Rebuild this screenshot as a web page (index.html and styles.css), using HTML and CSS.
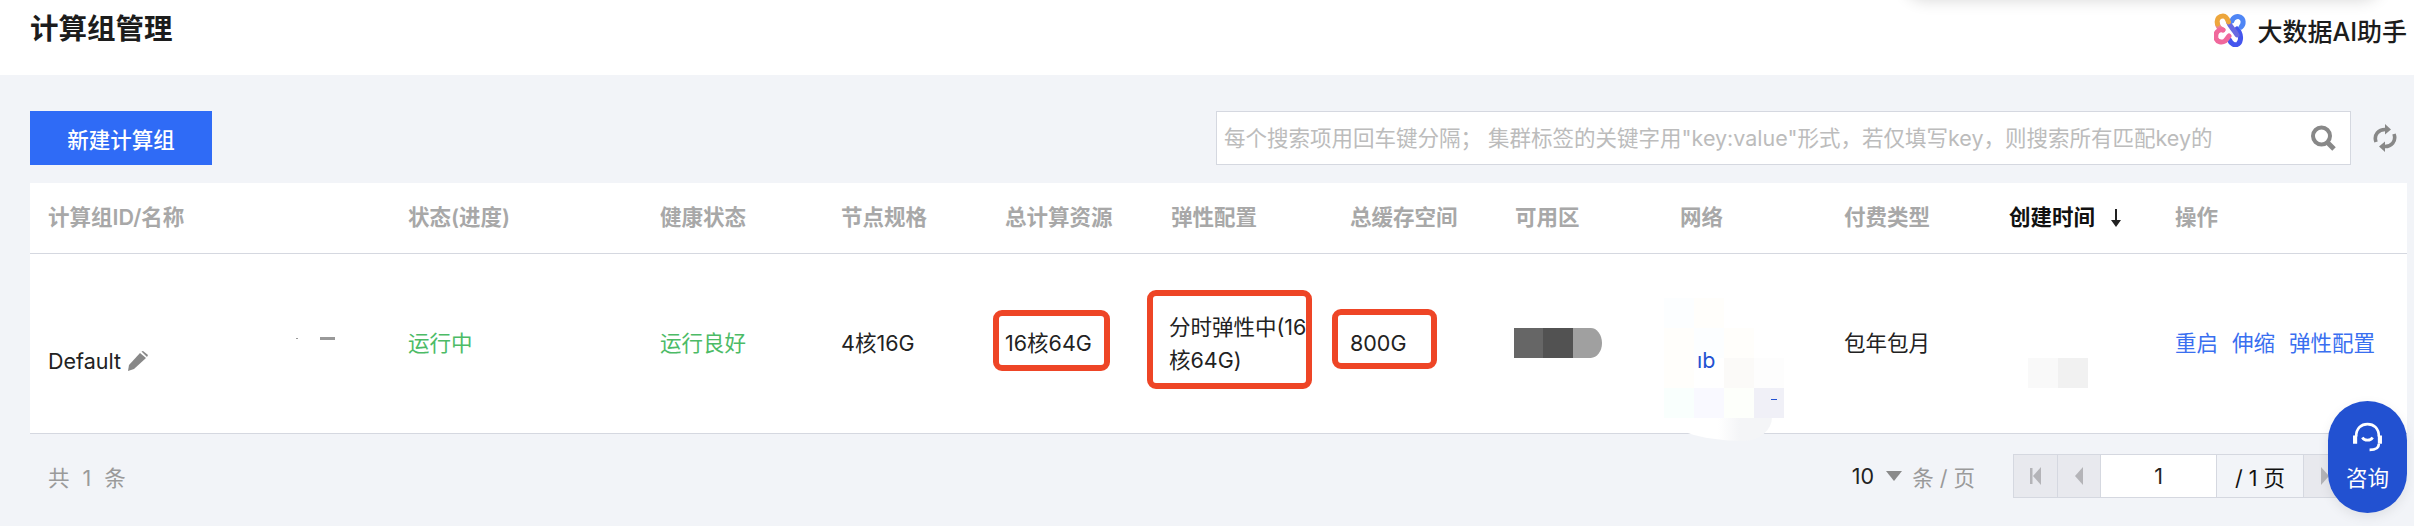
FILE: index.html

```html
<!DOCTYPE html>
<html lang="zh-CN">
<head>
  <meta charset="UTF-8">
  <title>计算组管理</title>
  <link rel="stylesheet" href="styles.css">
</head>
<body>
  <header class="topbar">
    <h1 class="title">计算组管理</h1>
    <div class="assistant">
      <svg class="assistant-logo" viewBox="8 4 34 34" fill="none" stroke-width="5" stroke-linecap="round">
        <path d="M31 20 C35 24 36 32 32 35 C29 37 25 35 23.500 31" stroke="#4455ee"/>
        <path d="M22.500 13 C24 18 28 20 31 26" stroke="#6a6ae0"/>
        <path d="M26 12 C27 8 31 7 34 8 C38 10 38 15 35 18" stroke="#4f86f5"/>
        <path d="M11.500 15 C12 18 14 20 17 21" stroke="#e8858f"/>
        <path d="M17 21 C12 20 9 24 10 29 C11 33 16 34 19 32 C21 30 22 28 23 27" stroke="#f0689c"/>
        <path d="M11.500 15 C10 9 14 7 17 7 C20 7 21.500 10 22.500 13" stroke="#eda63c"/>
      </svg>
      <span>大数据AI助手</span>
    </div>
  </header>

  <main class="content">
    <div class="toolbar">
      <button class="btn-primary">新建计算组</button>
      <div class="search">
        <input type="text" placeholder="每个搜索项用回车键分隔； 集群标签的关键字用&quot;key:value&quot;形式，若仅填写key，则搜索所有匹配key的">
        <svg class="search-icon" viewBox="0 0 28 28" fill="none" stroke="#888" stroke-width="4">
          <circle cx="12.500" cy="12" r="8.500"/>
          <path d="M18.500 18.500 L25 25" stroke-width="5"/>
        </svg>
      </div>
      <svg class="refresh" viewBox="0 0 24 30" fill="none" stroke="#888" stroke-width="3.600">
        <path d="M3 19 C0.500 12 5.500 6 13 6.500"/>
        <path d="M21 11 C23.500 18 18.500 24 11 23.500"/>
        <path d="M12 1 L18 6.500 L12 11.500 Z" fill="#888" stroke="none"/>
        <path d="M12 18.500 L6 23.500 L12 29 Z" fill="#888" stroke="none"/>
      </svg>
    </div>

    <table class="cluster-table">
      <colgroup>
        <col class="c-name"><col class="c-status"><col class="c-health"><col class="c-spec">
        <col class="c-total"><col class="c-scale"><col class="c-cache"><col class="c-zone">
        <col class="c-net"><col class="c-pay"><col class="c-time"><col>
      </colgroup>
      <thead>
        <tr>
          <th>计算组ID/名称</th>
          <th>状态(进度)</th>
          <th>健康状态</th>
          <th>节点规格</th>
          <th>总计算资源</th>
          <th>弹性配置</th>
          <th>总缓存空间</th>
          <th>可用区</th>
          <th>网络</th>
          <th>付费类型</th>
          <th class="sorted">创建时间
            <svg class="sort-arrow" viewBox="0 0 12 18" fill="#222"><path d="M5 0 H7 V11 H11 L6 18 L1 11 H5 Z"/></svg>
          </th>
          <th>操作</th>
        </tr>
      </thead>
      <tbody>
        <tr>
          <td class="name-cell">
            Default
            <svg class="edit" viewBox="0 0 20 20" fill="#888"><path d="M0 20 L1 14 L12 2 L18 7 L6 18 Z"/><path d="M13.500 0.500 L15 0 L20 4 L19 6 Z"/></svg>
          </td>
          <td class="ok">运行中</td>
          <td class="ok">运行良好</td>
          <td>4核16G</td>
          <td>16核64G</td>
          <td class="scale-cell">分时弹性中(16核64G)</td>
          <td>800G</td>
          <td></td>
          <td></td>
          <td>包年包月</td>
          <td></td>
          <td class="actions"><a>重启</a><a>伸缩</a><a>弹性配置</a></td>
        </tr>
      </tbody>
    </table>

    <footer class="table-foot">
      <span class="total">共 1 条</span>
      <div class="pager">
        <div class="page-size">
          <span class="size-value">10</span>
          <i class="caret"></i>
          <span class="size-label">条 / 页</span>
        </div>
        <div class="page-nav">
          <span class="page-btn"><svg viewBox="0 0 12 18" fill="#b4b4b8"><path d="M0 1 H2.500 V17 H0 Z"/><path d="M11 0 V18 L3 9 Z"/></svg></span>
          <span class="page-btn"><svg viewBox="0 0 12 18" fill="#b4b4b8"><path d="M10 0 V18 L2 9 Z"/></svg></span>
          <span class="page-input">1</span>
          <span class="page-count">/ 1 页</span>
          <span class="page-btn"><svg viewBox="0 0 12 18" fill="#b4b4b8"><path d="M2 0 V18 L10 9 Z"/></svg></span>
          <span class="page-btn"><svg viewBox="0 0 12 18" fill="#b4b4b8"><path d="M12 1 H9.500 V17 H12 Z"/><path d="M1 0 V18 L9 9 Z"/></svg></span>
        </div>
      </div>
    </footer>
  </main>

  <!-- things painted over the screenshot: red marks and redactions -->
  <div class="top-shadow"></div>
  <div class="mark mark-total"></div>
  <div class="mark mark-scale"></div>
  <div class="mark mark-cache"></div>
  <div class="speck speck-dot"></div>
  <div class="speck speck-dash"></div>
  <div class="mosaic"><i></i><i></i><i></i></div>
  <div class="smudge-tail"></div>
  <div class="smudge">
    <i class="t-cool"></i><i class="t-warm"></i><i></i><i></i>
    <i class="t-warm"></i><i class="t-cool"></i><i class="t-warm"></i><i></i>
    <i class="t-warm"></i><i></i><i class="t-sand"></i><i class="t-pale"></i>
    <i class="t-mint"></i><i class="t-lilac"></i><i class="t-cream"></i><i class="t-grey"></i>
  </div>
  <div class="net-bit">ıb</div>
  <div class="net-tick"></div>
  <div class="time-blur"><i></i><i></i></div>

  <div class="consult">
    <svg class="consult-icon" viewBox="0 0 30 30" fill="none" stroke="#fff" stroke-width="2.600">
      <path d="M4 14 C4 6 9 2 15 2 C21 2 26 6 26 14"/>
      <path d="M1 13 H5 V21 H1 Z M25 13 H29 V21 H25 Z" fill="#fff" stroke="none"/>
      <path d="M10 15 C12 18.500 18 18.500 20 15"/>
      <path d="M26 21 C26 25 23 27 17 27"/>
    </svg>
    <span>咨询</span>
  </div>
</body>
</html>
```

FILE: styles.css

```css
* {
  box-sizing: border-box;
}
html, body {
  margin: 0;
  height: 526px;
  overflow: hidden;
}
body {
  position: relative;
  background: #f2f4f8;
  color: #222;
  font-family: Inter, "Noto Sans CJK SC", sans-serif;
  font-size: 21.500px;
}

.topbar {
  display: flex;
  justify-content: space-between;
  height: 75px;
  padding: 0 7px 0 30px;
  background: #fff;
}
.title {
  margin: 0;
  font-size: 28.500px;
  font-weight: 600;
  line-height: 58px;
  color: #1c1c1c;
}
.assistant {
  display: flex;
  align-items: center;
  gap: 9px;
  height: 60px;
  font-weight: 500;
  font-size: 25px;
  color: #1c1c1c;
}
.assistant-logo {
  width: 34px;
  height: 34px;
}

.content {
  padding: 36px 7px 0 30px;
}
.toolbar {
  display: flex;
  align-items: center;
  height: 54px;
  padding-right: 10px;
}
.btn-primary {
  width: 182px;
  height: 54px;
  border: none;
  background: #2f6bf6;
  color: #fff;
  font: inherit;
  font-weight: 500;
}
.search {
  display: flex;
  align-items: center;
  width: 1135px;
  height: 54px;
  margin-left: auto;
  padding-right: 13px;
  background: #fff;
  border: 1px solid #d5d8e0;
}
.search input {
  flex: 1;
  min-width: 0;
  height: 100%;
  margin-right: 50px;
  padding: 0 0 0 7px;
  border: none;
  outline: none;
  background: none;
  font: inherit;
}
.search input::placeholder {
  color: #bcbcbc;
}
.search-icon {
  width: 28px;
  height: 28px;
}
.refresh {
  width: 24px;
  height: 30px;
  margin-left: 22px;
}

.cluster-table {
  width: 100%;
  height: 251px;
  margin-top: 18px;
  background: #fff;
  border-collapse: collapse;
  table-layout: fixed;
}
.c-name { width: 360px; }
.c-status { width: 252px; }
.c-health { width: 181px; }
.c-spec { width: 164px; }
.c-total { width: 166px; }
.c-scale { width: 179px; }
.c-cache { width: 165px; }
.c-zone { width: 165px; }
.c-net { width: 164px; }
.c-pay { width: 165px; }
.c-time { width: 166px; }
.cluster-table th {
  height: 70px;
  padding: 0 0 4px 18px;
  text-align: left;
  font-weight: 600;
  color: #a8a8a8;
  border-bottom: 1px solid #d5d8e0;
}
.cluster-table th.sorted {
  color: #111;
}
.sort-arrow {
  width: 12px;
  height: 18px;
  margin-left: 10px;
  vertical-align: -2px;
}
.cluster-table td {
  padding: 0 0 0 18px;
  line-height: 33px;
  border-bottom: 1px solid #d5d8e0;
}
.cluster-table .name-cell {
  padding-top: 36px;
}
.edit {
  width: 20px;
  height: 20px;
  margin-left: 1px;
  vertical-align: -2px;
}
.ok {
  color: #4cbb66;
}
.cluster-table .scale-cell {
  padding-left: 16px;
  padding-right: 14px;
  padding-top: 2px;
}
.actions a {
  margin-right: 14px;
  color: #3a6ff0;
}

.table-foot {
  display: flex;
  justify-content: space-between;
  align-items: center;
  height: 44px;
  margin-top: 20px;
  padding: 0 17px 0 18px;
}
.total {
  color: #9a9a9a;
  letter-spacing: 3.500px;
}
.pager {
  display: flex;
  align-items: center;
  gap: 38px;
}
.page-size {
  display: flex;
  align-items: center;
}
.caret {
  width: 0;
  height: 0;
  margin: 0 10px 0 12px;
  border-left: 8px solid transparent;
  border-right: 8px solid transparent;
  border-top: 10px solid #8a8a8a;
}
.size-label {
  color: #9a9a9a;
}
.page-nav {
  display: flex;
  height: 44px;
  border: 1px solid #d5d8e0;
}
.page-nav > span {
  display: flex;
  align-items: center;
  justify-content: center;
  border-left: 1px solid #d5d8e0;
}
.page-nav > span:first-child {
  border-left: none;
}
.page-btn {
  width: 43px;
  background: #e8e9ee;
}
.page-btn svg {
  width: 12px;
  height: 18px;
}
.page-input {
  width: 116px;
  background: #fff;
}
.page-count {
  width: 87px;
  color: #111;
}

.top-shadow {
  position: absolute;
  top: -44px;
  left: 1905px;
  width: 476px;
  height: 40px;
  border-radius: 20px;
  box-shadow: 0 4px 16px rgba(0, 0, 0, 0.16);
}
.mark {
  position: absolute;
  border: 6px solid #ee4526;
  border-radius: 9px;
}
.mark-total {
  left: 993px;
  top: 310px;
  width: 117px;
  height: 61px;
}
.mark-scale {
  left: 1147px;
  top: 290px;
  width: 165px;
  height: 99px;
}
.mark-cache {
  left: 1332px;
  top: 309px;
  width: 105px;
  height: 60px;
}
.speck {
  position: absolute;
  background: #999;
}
.speck-dot {
  left: 296px;
  top: 338px;
  width: 2px;
  height: 1px;
}
.speck-dash {
  left: 320px;
  top: 337px;
  width: 15px;
  height: 3px;
}
.mosaic {
  position: absolute;
  left: 1514px;
  top: 328px;
  display: flex;
  width: 88px;
  height: 30px;
  overflow: hidden;
  border-radius: 0 15px 15px 0 / 0 20px 20px 0;
}
.mosaic i {
  width: 30px;
  background: #666;
}
.mosaic i:nth-child(2) {
  background: #525252;
}
.mosaic i:nth-child(3) {
  background: #a0a0a0;
}
.smudge {
  position: absolute;
  left: 1664px;
  top: 298px;
  display: grid;
  grid-template-columns: repeat(4, 30px);
  grid-auto-rows: 30px;
  height: 120px;
}
.smudge i {
  background: #fff;
}
.smudge .t-cool { background: #fcfeff; }
.smudge .t-warm { background: #fffefb; }
.smudge .t-sand { background: #fbfaf8; }
.smudge .t-pale { background: #fdfdfd; }
.smudge .t-mint { background: #f9fffd; }
.smudge .t-lilac { background: #f9f9ff; }
.smudge .t-cream { background: #fdfffb; }
.smudge .t-grey { background: #f0f0f7; }
.smudge-tail {
  position: absolute;
  left: 1664px;
  top: 400px;
  width: 108px;
  height: 41px;
  border-radius: 0 0 36px 100px / 0 0 30px 36px;
  background: linear-gradient(to right, #fff 50%, #f4f5f7 70%);
}
.net-bit {
  position: absolute;
  left: 1697px;
  top: 344px;
  line-height: 33px;
  color: #2251d1;
}
.net-tick {
  position: absolute;
  left: 1771px;
  top: 399px;
  width: 6px;
  height: 1px;
  background: #2251d1;
}
.time-blur {
  position: absolute;
  left: 2028px;
  top: 358px;
  display: flex;
  height: 30px;
}
.time-blur i {
  width: 30px;
  background: #f9f9f9;
}
.time-blur i:nth-child(2) {
  background: #f1f1f1;
}

.consult {
  position: absolute;
  right: 7px;
  bottom: 13px;
  display: flex;
  flex-direction: column;
  align-items: center;
  gap: 8px;
  width: 79px;
  height: 112px;
  padding-top: 21px;
  border-radius: 40px;
  background: #2251d1;
  color: #fff;
  box-shadow: 0 4px 12px rgba(0, 0, 0, 0.08);
}
.consult-icon {
  width: 31px;
  height: 31px;
}
```
